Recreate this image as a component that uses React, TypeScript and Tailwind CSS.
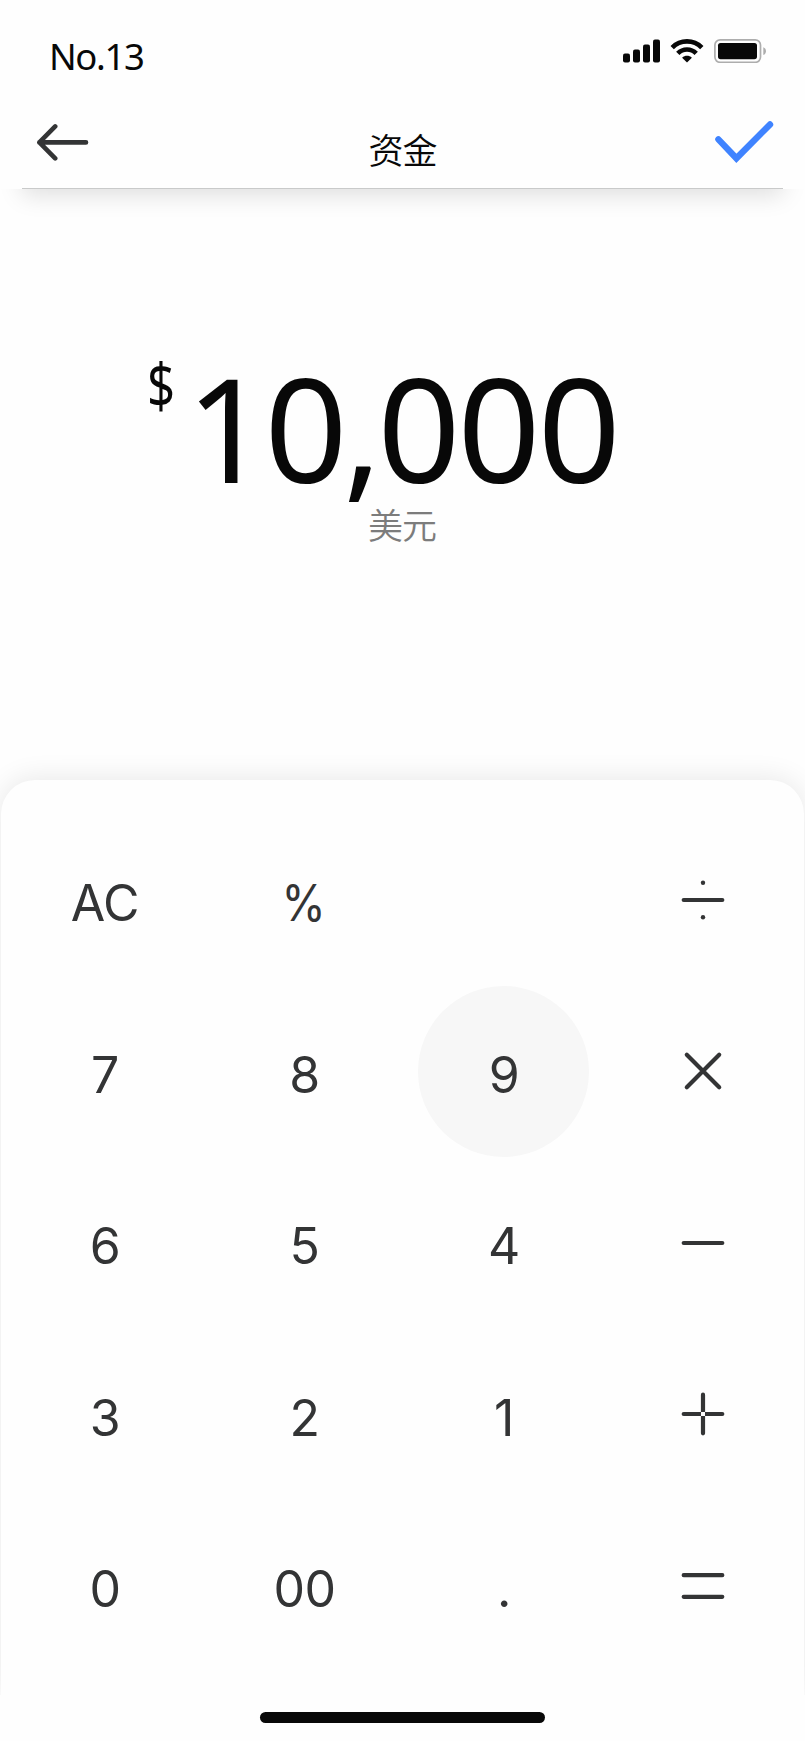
import type { ReactNode } from "react";

function SignalIcon() {
  return (
    <svg width="37" height="24" viewBox="0 0 37 24" fill="#080808">
      <rect x="0" y="14.5" width="7" height="9" rx="2" />
      <rect x="10" y="10.5" width="7" height="13" rx="2" />
      <rect x="20" y="5.5" width="7" height="18" rx="2" />
      <rect x="30" y="0.5" width="7" height="23" rx="2" />
    </svg>
  );
}

function WifiIcon() {
  return (
    <svg width="34" height="24" viewBox="0 0 34 24" fill="none" stroke="#080808" strokeWidth="4.7">
      <path d="M2.2 8.6C10.4 0.4 23.6 0.4 31.8 8.6" />
      <path d="M7.8 14.4C13 9.2 21 9.2 26.2 14.4" />
      <path d="M17 23.6L12.1 18.8C15 16.2 19 16.2 21.9 18.8Z" fill="#080808" stroke="none" />
    </svg>
  );
}

function BatteryIcon() {
  return (
    <svg width="53" height="24" viewBox="0 0 53 24">
      <rect x="0.9" y="0.9" width="45.6" height="22.4" rx="5.2" fill="none" stroke="#adadad" strokeWidth="1.7" />
      <rect x="4" y="4" width="39" height="16.2" rx="2.6" fill="#080808" />
      <path d="M49.3 8.2C52.9 9.4 52.9 14.8 49.3 16Z" fill="#adadad" />
    </svg>
  );
}

function OpIcon({ children }: { children: ReactNode }) {
  return (
    <svg width="44" height="44" viewBox="-22 -22 44 44" fill="none" stroke="#333435" strokeWidth="4.2" strokeLinecap="round">
      {children}
    </svg>
  );
}

const divide = (
  <OpIcon>
    <path d="M-19.3 0H19.3" />
    <circle cy="-17.2" r="2.2" fill="#333435" stroke="none" />
    <circle cy="17.2" r="2.2" fill="#333435" stroke="none" />
  </OpIcon>
);
const times = (
  <OpIcon>
    <path d="M-16.2 -16.2L16.2 16.2M16.2 -16.2L-16.2 16.2" />
  </OpIcon>
);
const minus = (
  <OpIcon>
    <path d="M-19.3 0H19.3" />
  </OpIcon>
);
const plus = (
  <OpIcon>
    <path d="M-19.3 0H19.3M0 -19.3V19.3" />
    <rect x="-2" y="-2" width="4" height="4" fill="#fefefe" stroke="none" />
  </OpIcon>
);
const equals = (
  <OpIcon>
    <path d="M-19.3 -10.8H19.3M-19.3 10.8H19.3" />
  </OpIcon>
);

const keys: ReactNode[] = [
  "AC", "%", "", divide,
  "7", "8", "9", times,
  "6", "5", "4", minus,
  "3", "2", "1", plus,
  "0", "00", ".", equals,
];

function Key({ value }: { value: ReactNode }) {
  const isText = typeof value === "string";
  const active = value === "9";
  return (
    <div className="flex items-center justify-center">
      <div
        className={
          active
            ? "flex size-[171px] items-center justify-center rounded-full bg-[#f7f7f7]"
            : "flex size-[171px] items-center justify-center"
        }
      >
        {isText ? (
          <span className={value === "%" ? "scale-x-90 pt-[7px]" : "pt-[7px] pl-px tracking-[-0.5px]"}>{value}</span>
        ) : (
          value
        )}
      </div>
    </div>
  );
}

export default function App() {
  return (
    <div className="flex h-[1741px] w-[805px] flex-col overflow-hidden bg-[#fefefe] font-['Noto_Sans','Noto_Sans_CJK_SC',sans-serif] text-[#080808]">
      <div className="flex h-[100px] shrink-0 items-start justify-between pr-[38px] pl-[48px]">
        <div className="pt-[36px] pl-px text-[36.5px] leading-[40px] tracking-[-1.4px]">No.13</div>
        <div className="flex pt-[39px]">
          <SignalIcon />
          <div className="w-[10px]" />
          <WifiIcon />
          <div className="w-[10px]" />
          <BatteryIcon />
        </div>
      </div>

      <div className="flex h-[88px] shrink-0 items-start justify-between pr-[29px] pl-[37px]">
        <svg className="mt-[22px]" width="53" height="40" viewBox="0 0 53 40" fill="none" stroke="#333435" strokeWidth="4.6" strokeLinecap="round" strokeLinejoin="round">
          <path d="M18.2 4.4L2.4 20.4L18.2 36.4M2.4 20.4H49" />
        </svg>
        <h1 className="pt-[29px] pl-px font-['Noto_Sans_CJK_SC',sans-serif] text-[35px] leading-[40px] font-[350] tracking-[-1px]">资金</h1>
        <svg className="mt-[20px]" width="62" height="46" viewBox="0 0 62 46" fill="none" stroke="#3f83ff" strokeWidth="6.4" strokeLinecap="round">
          <path d="M4.4 19.4L22.4 38.3L56 4.4" />
        </svg>
      </div>
      <div className="mx-[22px] h-px shrink-0 bg-[#c9caca]" />
      <div className="h-[40px] shrink-0 overflow-hidden">
        <div className="mx-[22px] -mt-[60px] h-[60px] shadow-[0_6px_24px_rgba(0,0,0,0.13)]" />
      </div>

      <div className="flex h-[551px] shrink-0 flex-col items-center">
        <div className="flex h-[270px] w-full items-start pl-[147px]">
          <span className="mt-[120px] w-[39px] origin-center scale-y-[1.28] text-[49px] leading-[70px]">$</span>
          <span className="mt-[98px] text-[145px] leading-[200px] tracking-[-2.9px] whitespace-nowrap">
            <span className="tracking-[-4.4px]">10,</span>000
          </span>
        </div>
        <div className="mt-[5px] pr-px font-['Noto_Sans_CJK_SC',sans-serif] text-[35px] leading-[40px] font-[350] tracking-[-1px] text-[#7c7c7c]">美元</div>
      </div>

      <div className="mx-px h-[915px] shrink-0 rounded-t-[34px] bg-[#fefefe] pt-[34px] shadow-[0_-2px_28px_rgba(0,0,0,0.09)]">
        <div className="ml-[3.7px] grid w-[798px] grid-cols-4 auto-rows-[171.5px] font-[Inter,sans-serif] text-[50px] leading-[60px] text-[#333435]">
          {keys.map((value, i) => (
            <Key key={i} value={value} />
          ))}
        </div>
      </div>
      <div className="relative flex h-[46px] shrink-0 justify-center bg-[#fefefe] pt-[17px]">
        <div className="h-[11px] w-[285px] rounded-full bg-[#080808]" />
      </div>
    </div>
  );
}
